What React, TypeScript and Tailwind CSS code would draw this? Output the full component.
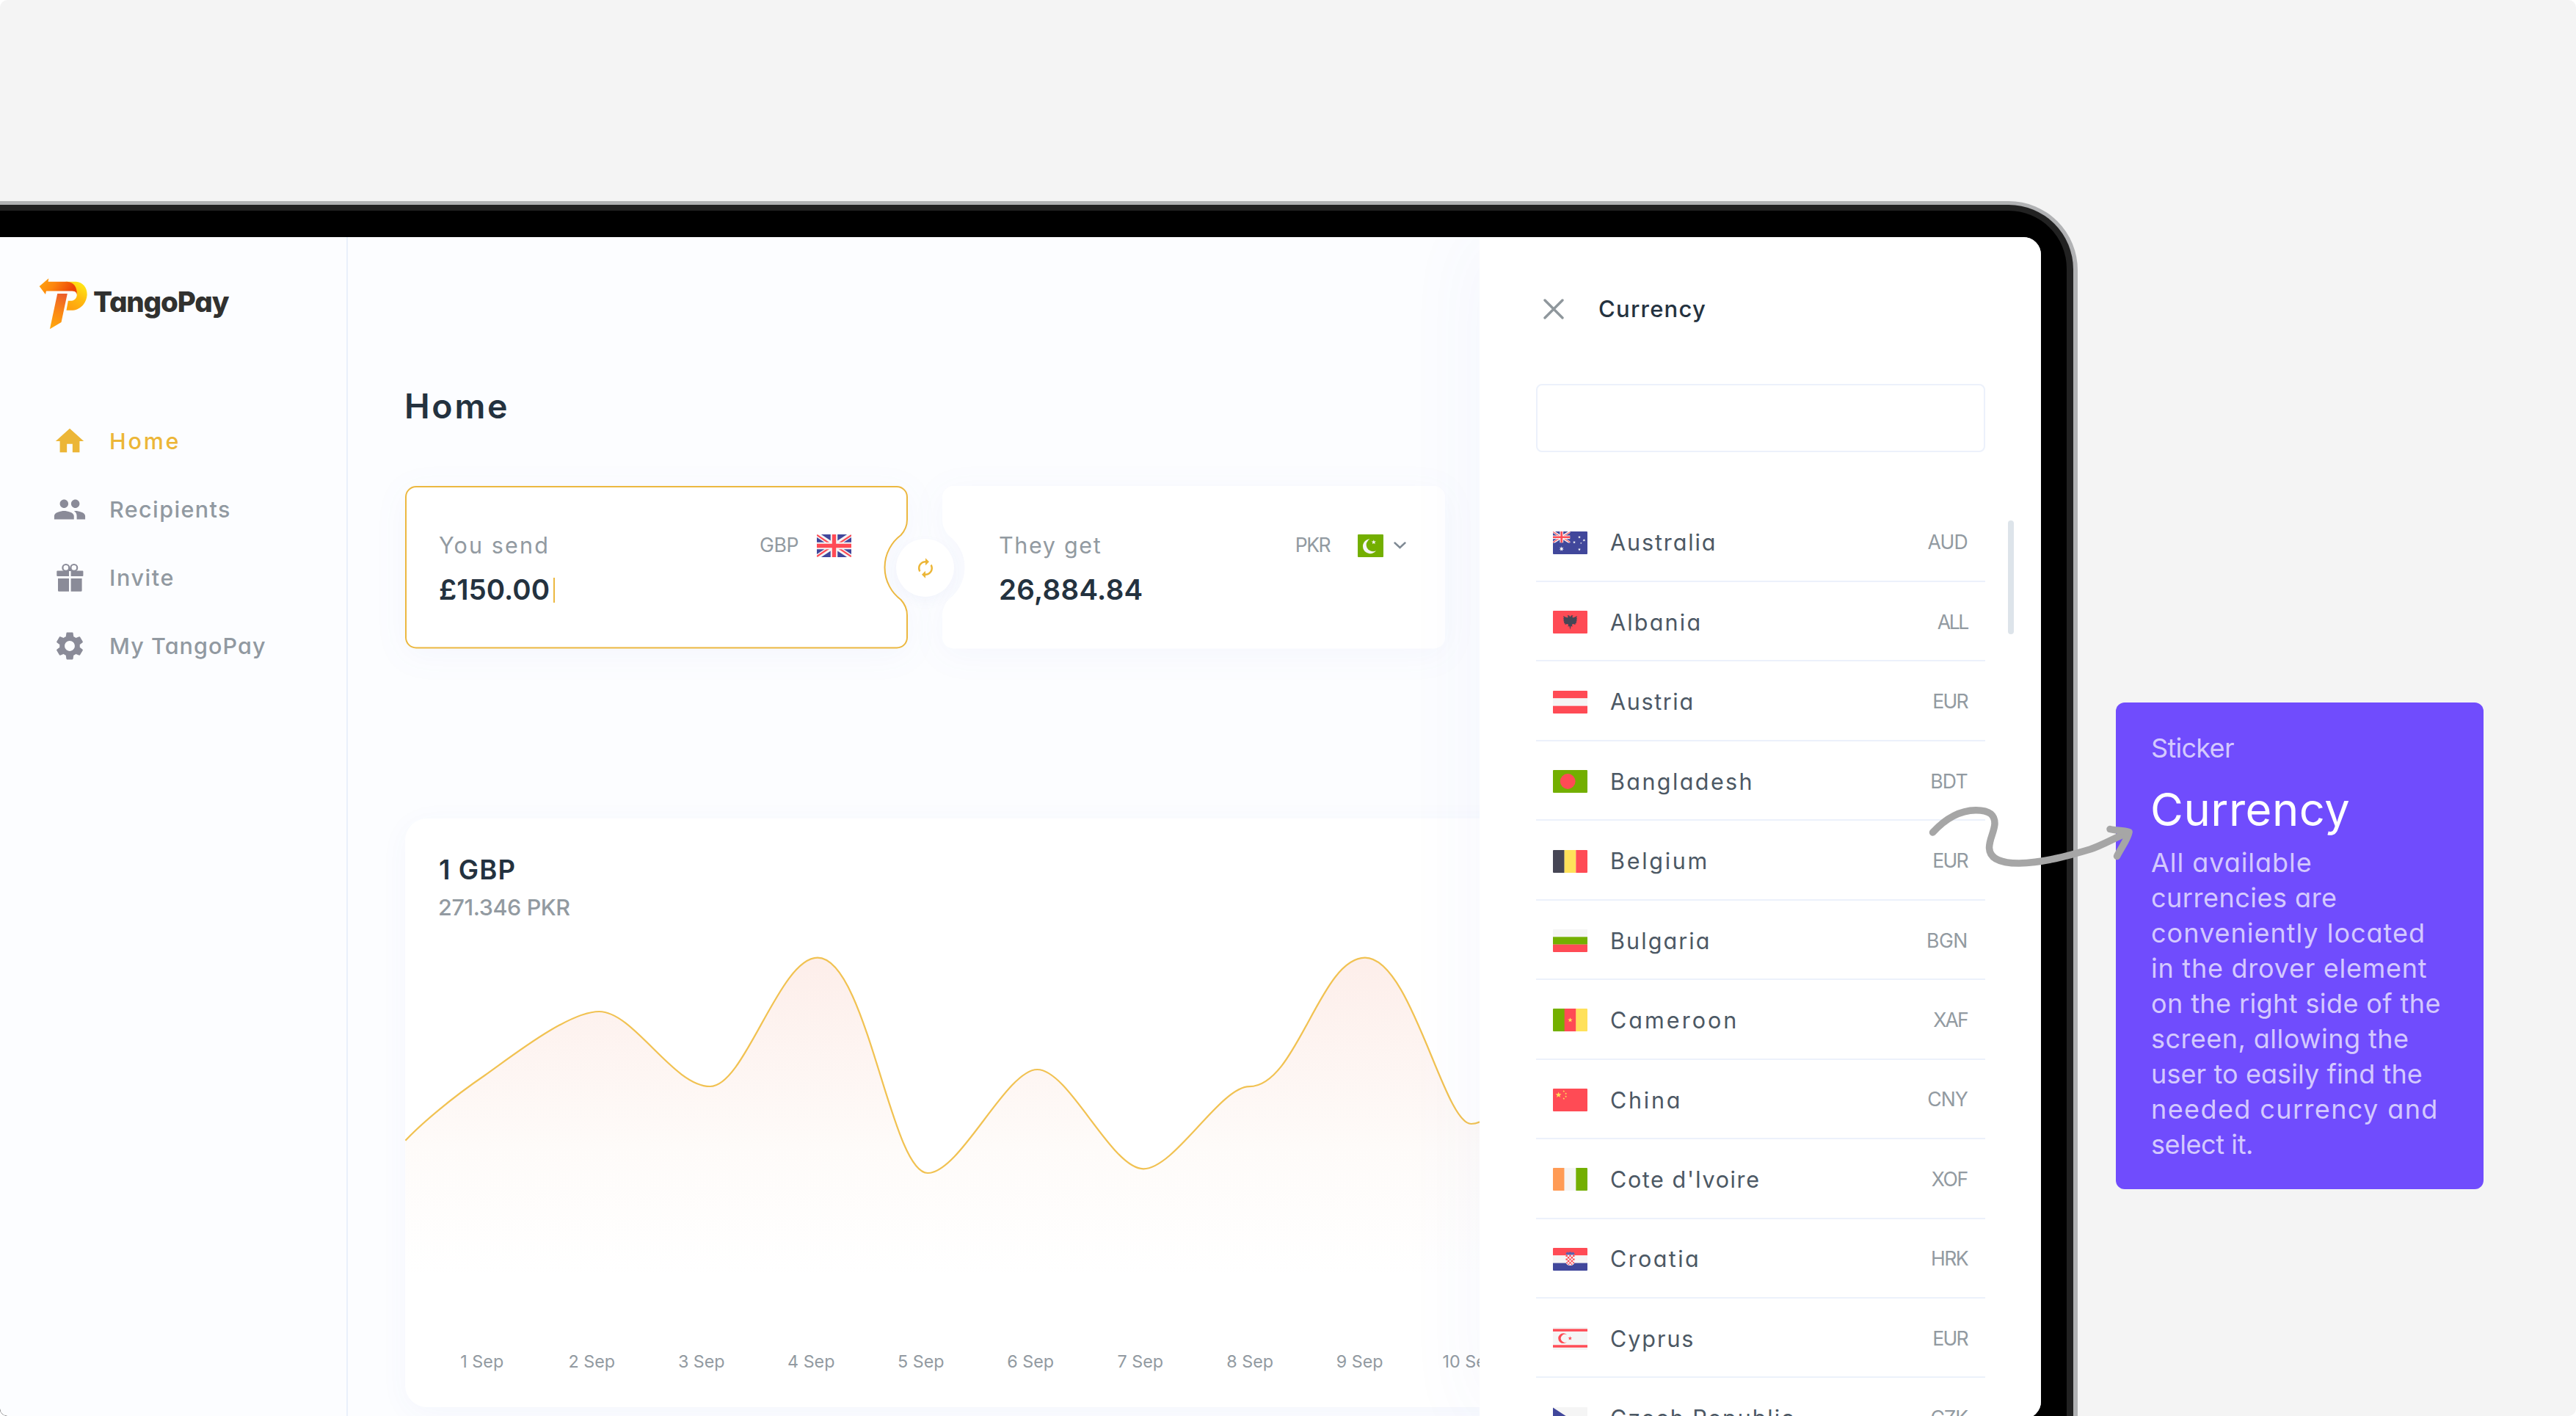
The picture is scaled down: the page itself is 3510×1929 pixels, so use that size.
import type { ReactNode } from "react";
import { MdAutorenew, MdHome, MdPeople, MdSettings } from "react-icons/md";

const RED = "#ff4b55";
const BLUE = "#41479b";
const GREEN = "#73af00";
const YELLOW = "#ffe15a";
const LIGHT = "#f5f5f5";
const DARK = "#464655";

const NAV_ITEMS = [
  { label: "Home", icon: MdHome, tracking: "tracking-[2.75px]", active: true },
  { label: "Recipients", icon: MdPeople, tracking: "tracking-[1.4px]", active: false },
  { label: "Invite", icon: GiftIcon, tracking: "tracking-[1.6px]", active: false },
  { label: "My TangoPay", icon: MdSettings, tracking: "tracking-[1.1px]", active: false },
];

const DAYS = ["1 Sep", "2 Sep", "3 Sep", "4 Sep", "5 Sep", "6 Sep", "7 Sep", "8 Sep", "9 Sep", "10 Sep"];

const CURRENCIES: { name: string; code: string; flag: ReactNode; tracking: string; codeTracking: string }[] = [
  { name: "Australia", code: "AUD", flag: <AustraliaFlag />, tracking: "tracking-[1.9px]", codeTracking: "tracking-[-0.8px]" },
  { name: "Albania", code: "ALL", flag: <AlbaniaFlag />, tracking: "tracking-[2.2px]", codeTracking: "tracking-[-2.4px]" },
  { name: "Austria", code: "EUR", flag: <HorizontalBands colors={[RED, LIGHT, RED]} />, tracking: "tracking-[1.65px]", codeTracking: "tracking-[-1.7px]" },
  { name: "Bangladesh", code: "BDT", flag: <BangladeshFlag />, tracking: "tracking-[2.4px]", codeTracking: "tracking-[-0.7px]" },
  { name: "Belgium", code: "EUR", flag: <VerticalBands colors={[DARK, YELLOW, RED]} />, tracking: "tracking-[2.7px]", codeTracking: "tracking-[-1.7px]" },
  { name: "Bulgaria", code: "BGN", flag: <HorizontalBands colors={[LIGHT, GREEN, RED]} />, tracking: "tracking-[2.1px]", codeTracking: "tracking-[-0.4px]" },
  { name: "Cameroon", code: "XAF", flag: <CameroonFlag />, tracking: "tracking-[3.05px]", codeTracking: "tracking-[-1.8px]" },
  { name: "China", code: "CNY", flag: <ChinaFlag />, tracking: "tracking-[2.75px]", codeTracking: "tracking-[-0.9px]" },
  { name: "Cote d'Ivoire", code: "XOF", flag: <VerticalBands colors={["#ff9b55", LIGHT, GREEN]} />, tracking: "tracking-[1.6px]", codeTracking: "tracking-[-1.3px]" },
  { name: "Croatia", code: "HRK", flag: <CroatiaFlag />, tracking: "tracking-[2.4px]", codeTracking: "tracking-[-1.6px]" },
  { name: "Cyprus", code: "EUR", flag: <CyprusFlag />, tracking: "tracking-[1.95px]", codeTracking: "tracking-[-1.7px]" },
  { name: "Czech Republic", code: "CZK", flag: <CzechFlag />, tracking: "tracking-[1.95px]", codeTracking: "tracking-[-1.2px]" },
];

const STICKER_LINES = [
  { text: "All available", tracking: "tracking-[0.95px]" },
  { text: "currencies are", tracking: "tracking-[0.5px]" },
  { text: "conveniently located", tracking: "tracking-[1px]" },
  { text: "in the drover element", tracking: "tracking-[0.75px]" },
  { text: "on the right side of the", tracking: "tracking-[0.4px]" },
  { text: "screen, allowing the", tracking: "tracking-[0.45px]" },
  { text: "user to easily find the", tracking: "tracking-[0.1px]" },
  { text: "needed currency and", tracking: "tracking-[1.4px]" },
  { text: "select it.", tracking: "tracking-[-0.4px]" },
];

const CURVE =
  "M552.4 1553.7C575 1530 615 1496 660.5 1465C700 1437 775 1378 816.5 1378C863.4 1378 917 1480 967.6 1480" +
  "C1015 1480 1061.6 1304.7 1114 1304.7C1181 1304.7 1214 1598 1264 1598C1308.4 1598 1371 1457 1413.4 1457" +
  "C1456.6 1457 1514.2 1592.3 1558 1592.3C1600.4 1592.3 1662.8 1480.2 1702.3 1480.2" +
  "C1767.3 1480.2 1798.4 1304.7 1860 1304.7C1923 1304.7 1967.2 1531 2004.6 1531C2020 1531 2030 1518 2042 1508";

/* ---------- Icons ---------- */

function GiftIcon({ className }: { className?: string }) {
  return (
    <svg viewBox="0 0 46 46" className={className} fill="currentColor">
      <path d="M5.3 14.4q0-1 1-1H22V21H6.3q-1 0-1-1zM24.6 13.4h15.8q1 0 1 1V20q0 1-1 1H24.6zM7 24.1h15v17.6H8.2q-1.2 0-1.2-1.2zM24.6 24.1h15v16.4q0 1.2-1.2 1.2H24.6z" />
      <circle cx="17.8" cy="9.4" r="4.4" fill="none" stroke="currentColor" strokeWidth="2.2" />
      <circle cx="28.8" cy="9.4" r="4.4" fill="none" stroke="currentColor" strokeWidth="2.2" />
      <path d="M20.5 14h5.6l-2.8-5z" />
    </svg>
  );
}

function LogoMark() {
  return (
    <svg viewBox="40 55 202 215" className="w-[67px] h-[72px] shrink-0">
      <defs>
        <linearGradient id="logo-arrow" x1="0" y1="0" x2="1" y2="0.25">
          <stop offset="0" stopColor="#ffa60c" />
          <stop offset="0.45" stopColor="#fd860c" />
          <stop offset="1" stopColor="#ec4207" />
        </linearGradient>
        <linearGradient id="logo-bowl" x1="0.85" y1="0.1" x2="0.4" y2="1">
          <stop offset="0" stopColor="#ffe716" />
          <stop offset="0.5" stopColor="#ffbc10" />
          <stop offset="1" stopColor="#ffa20f" />
        </linearGradient>
        <linearGradient id="logo-stem" x1="0.6" y1="0" x2="0.4" y2="1">
          <stop offset="0" stopColor="#ec5f2a" />
          <stop offset="0.55" stopColor="#fb8a14" />
          <stop offset="1" stopColor="#ffa70e" />
        </linearGradient>
      </defs>
      <path d="M150 71h42c28 2 46 23 46 52c-2 38-30 66-64 66h-21l7-39h14c14-2 22-13 22-25c0-10-6-15-16-15z" fill="url(#logo-bowl)" />
      <path d="M42 90L80 58l-2 13h78c26 1 42 22 40 53c-2-10-8-14-19-14H70l-3 13z" fill="url(#logo-arrow)" />
      <path d="M116 120h41l-25 118l-47 28z" fill="url(#logo-stem)" />
    </svg>
  );
}

/* ---------- Flags ---------- */

function Flag({ children }: { children: ReactNode }) {
  return (
    <svg viewBox="0 0 47 31" className="w-[47px] h-[31px] shrink-0 rounded-[1px]">
      {children}
    </svg>
  );
}

function UnionJack() {
  return (
    <>
      <rect width="47" height="31" fill={BLUE} />
      <path d="M0 0L47 31M47 0L0 31" stroke={LIGHT} strokeWidth="6.5" />
      <path d="M0 0.8L22 15.5M47 1.2L26 15M0 30L21 16M25 15.5L47 30.2" stroke={RED} strokeWidth="2.2" />
      <path d="M23.5 0V31M0 15.5H47" stroke={LIGHT} strokeWidth="9.5" />
      <path d="M23.5 0V31M0 15.5H47" stroke={RED} strokeWidth="5.4" />
    </>
  );
}

function star(cx: number, cy: number, r: number, points = 5) {
  const out: string[] = [];
  for (let i = 0; i < points * 2; i++) {
    const rad = i % 2 ? r * 0.42 : r;
    const a = (Math.PI * i) / points - Math.PI / 2;
    out.push(`${(cx + rad * Math.cos(a)).toFixed(2)},${(cy + rad * Math.sin(a)).toFixed(2)}`);
  }
  return out.join(" ");
}

function HorizontalBands({ colors }: { colors: string[] }) {
  return (
    <Flag>
      {colors.map((c, i) => (
        <rect key={i} y={i * 10.33} width="47" height="10.4" fill={c} />
      ))}
    </Flag>
  );
}

function VerticalBands({ colors }: { colors: string[] }) {
  return (
    <Flag>
      {colors.map((c, i) => (
        <rect key={i} x={i * 15.67} width="15.7" height="31" fill={c} />
      ))}
    </Flag>
  );
}

function AustraliaFlag() {
  return (
    <Flag>
      <rect width="47" height="31" fill={BLUE} />
      <svg width="23.5" height="15.5" viewBox="0 0 47 31">
        <UnionJack />
      </svg>
      <polygon points={star(11.7, 23.7, 3.4, 7)} fill={LIGHT} />
      <polygon points={star(36, 7.7, 2, 7)} fill={LIGHT} />
      <polygon points={star(42.4, 12, 2, 7)} fill={LIGHT} />
      <polygon points={star(29, 14.7, 2, 7)} fill={LIGHT} />
      <polygon points={star(38.3, 16, 1.3)} fill={LIGHT} />
      <polygon points={star(36, 24.6, 2, 7)} fill={LIGHT} />
    </Flag>
  );
}

function AlbaniaFlag() {
  return (
    <Flag>
      <rect width="47" height="31" fill={RED} />
      <path
        d="M23.5 8.5l-1.6-2.3-2.6.4 1.4 1.3-.8 1.5-3-.9-2.7-1.5.6 3-.8 1 1 1.4-.8 1.7 1.3 1-.6 1.8 1.7.4-.2 1.8 3.2-1.2 1.6 1.2-1 2.4 2.2-.6 1.1 4.8 1.1-4.8 2.2.6-1-2.4 1.6-1.2 3.2 1.2-.2-1.8 1.7-.4-.6-1.8 1.3-1-.8-1.7 1-1.4-.8-1 .6-3-2.7 1.5-3 .9-.8-1.5 1.4-1.3-2.6-.4z"
        fill={DARK}
      />
    </Flag>
  );
}

function BangladeshFlag() {
  return (
    <Flag>
      <rect width="47" height="31" fill={GREEN} />
      <circle cx="20.2" cy="15.5" r="10.4" fill={RED} />
    </Flag>
  );
}

function CameroonFlag() {
  return (
    <Flag>
      <rect width="16" height="31" fill={GREEN} />
      <rect x="15.7" width="16" height="31" fill={RED} />
      <rect x="31.3" width="15.7" height="31" fill={YELLOW} />
      <polygon points={star(23.5, 15.6, 3.4)} fill={YELLOW} />
    </Flag>
  );
}

function ChinaFlag() {
  return (
    <Flag>
      <rect width="47" height="31" fill={RED} />
      <polygon points={star(7.6, 8.6, 4.2)} fill={YELLOW} />
      <polygon points={star(14.8, 3.6, 1.5)} fill={YELLOW} />
      <polygon points={star(17.6, 6.8, 1.5)} fill={YELLOW} />
      <polygon points={star(17.6, 10.8, 1.5)} fill={YELLOW} />
      <polygon points={star(14.8, 13.6, 1.5)} fill={YELLOW} />
    </Flag>
  );
}

function CroatiaFlag() {
  return (
    <Flag>
      <rect width="47" height="10.4" fill={RED} />
      <rect y="10.3" width="47" height="10.4" fill={LIGHT} />
      <rect y="20.6" width="47" height="10.4" fill={BLUE} />
      <path d="M17.5 7.5l2-2 1.5 1 2.5-1.3 2.5 1.3 1.5-1 2 2-.8 2.5H18.3z" fill="#5a62ae" />
      <path d="M17.5 9.6h12v8.5q0 6-6 6t-6-6z" fill={LIGHT} />
      <path
        d="M17.5 9.6h2.4v2.4h-2.4zM22.3 9.6h2.4v2.4h-2.4zM27.1 9.6h2.4v2.4h-2.4zM19.9 12h2.4v2.4h-2.4zM24.7 12h2.4v2.4h-2.4zM17.5 14.4h2.4v2.4h-2.4zM22.3 14.4h2.4v2.4h-2.4zM27.1 14.4h2.4v2.4h-2.4zM19.9 16.8h2.4v2.4h-2.4zM24.7 16.8h2.4v2.4h-2.4zM17.9 19.2h2v2.4h-1zM22.3 19.2h2.4v2.4h-2.4zM27.1 19.2h2v1.4l-2 1zM20.5 21.6h1.8v2l-1.8-.8zM24.7 21.6h1.8v1.2l-1.8.8z"
        fill={RED}
      />
    </Flag>
  );
}

function CyprusFlag() {
  return (
    <Flag>
      <rect width="47" height="31" fill={LIGHT} />
      <rect y="2.4" width="47" height="3.4" fill={RED} />
      <rect y="24.3" width="47" height="3.4" fill={RED} />
      <path d="M19.2 19.9a6.9 6.9 0 1 1 0-9.4a5.5 5.5 0 1 0 0 9.4z" fill={RED} />
      <polygon points={star(23.3, 15.2, 2.9)} fill={RED} />
    </Flag>
  );
}

function CzechFlag() {
  return (
    <Flag>
      <rect width="47" height="15.5" fill={LIGHT} />
      <rect y="15.5" width="47" height="15.5" fill={RED} />
      <path d="M0 0.5L23 15.5L0 30.5z" fill={BLUE} />
    </Flag>
  );
}

/* ---------- Layout ---------- */

function Sidebar() {
  return (
    <aside className="w-[474px] shrink-0 border-r-2 border-[#e9f0fb] pt-[55px]">
      <div className="flex items-center gap-[7px] pl-[53px] h-[72px]">
        <LogoMark />
        <span className="mb-[6px] text-[38.5px] leading-none font-extrabold tracking-[-1.15px] text-[#31312f]">TangoPay</span>
      </div>
      <nav className="mt-[104px]">
        {NAV_ITEMS.map((item) => (
          <div
            key={item.label}
            className={
              item.active
                ? "flex items-center h-[93px] pl-[72px] gap-[31px] text-[#ecb637]"
                : "flex items-center h-[93px] pl-[72px] gap-[31px] text-[#8a8b98]"
            }
          >
            <item.icon className="w-[46px] h-[46px] shrink-0" />
            <span className={`text-[30.5px] font-medium ${item.tracking} ${item.active ? "text-[#ecb637]" : "text-[#9199a1]"}`}>
              {item.label}
            </span>
          </div>
        ))}
      </nav>
    </aside>
  );
}

function CardShape({ outlined, className }: { outlined?: boolean; className: string }) {
  return (
    <svg viewBox="0 0 685 222" className={className}>
      <path
        d="M15 1H670a14 14 0 0 1 14 14V46C684 55 681 61 675.5 67A55 55 0 0 0 675.5 155C681 161 684 167 684 176V206.5a14 14 0 0 1-14 14H15a14 14 0 0 1-14-14V15A14 14 0 0 1 15 1z"
        fill="#ffffff"
        stroke={outlined ? "#ecb840" : "#ffffff"}
        strokeWidth="2"
      />
    </svg>
  );
}

function Exchange() {
  return (
    <div className="relative flex gap-[47px] mt-[79px]">
      <div className="relative w-[685px] h-[222px] shrink-0">
        <CardShape outlined className="absolute inset-0 w-[685px] h-[222px] overflow-visible drop-shadow-[0_8px_22px_rgba(70,90,200,0.045)]" />
        <div className="relative pt-[61px] pl-[46px] pr-[77px]">
          <div className="flex items-center h-10 text-[#929aa1]">
            <span className="flex-1 text-[30.5px] tracking-[2.15px]">You send</span>
            <span className="mr-[25px] text-[26.6px] tracking-[-0.45px]">GBP</span>
            <Flag>
              <UnionJack />
            </Flag>
          </div>
          <div className="flex items-center h-[50px] mt-4">
            <span className="text-[38.5px] font-semibold text-[#24323f]">£150.00</span>
            <span className="w-0.5 h-[34px] ml-[5px] bg-[#ecb840]" />
          </div>
        </div>
      </div>

      <div className="relative w-[685px] h-[222px] shrink-0">
        <CardShape className="absolute inset-0 w-[685px] h-[222px] overflow-visible -scale-x-100 drop-shadow-[0_8px_22px_rgba(70,90,200,0.045)]" />
        <div className="relative pt-[61px] pl-[77px] pr-[53px]">
          <div className="flex items-center h-10 text-[#929aa1]">
            <span className="flex-1 text-[30.5px] tracking-[1.65px]">They get</span>
            <span className="mr-[38px] text-[26.6px] tracking-[-1.6px]">PKR</span>
            <svg viewBox="0 0 35 31" className="w-[35px] h-[31px]">
              <rect width="35" height="31" rx="1" fill={GREEN} />
              <path d="M25 22.2a10 10 0 1 1-8.5-16a8.2 8.2 0 1 0 8.5 16z" fill={LIGHT} />
              <polygon points={star(21.8, 10.5, 3.3)} fill={LIGHT} />
            </svg>
            <svg viewBox="0 0 17 10" className="w-[17px] h-[10px] ml-[14px]" fill="none" stroke="#7f8a94" strokeWidth="2.4" strokeLinecap="round">
              <path d="M1.5 1.5L8.5 8L15.5 1.5" />
            </svg>
          </div>
          <div className="flex items-center h-[50px] mt-4">
            <span className="text-[38.5px] font-semibold tracking-[0.3px] text-[#24323f]">26,884.84</span>
          </div>
        </div>
      </div>

      {/* swap button sits in the notch between the cards */}
      <div className="absolute left-[669px] top-[72px] w-[79px] h-[79px] rounded-full bg-white flex items-center justify-center shadow-[0_6px_16px_rgba(70,90,200,0.05)]">
        <MdAutorenew className="w-[30px] h-[30px] text-[#ecb637]" />
      </div>
    </div>
  );
}

function RateChart() {
  return (
    <section className="w-[1640px] h-[802px] mt-[231px] pt-12 rounded-[30px] bg-white shadow-[0_8px_40px_rgba(70,90,200,0.045)]">
      <h2 className="pl-[46px] text-[36.5px] leading-[44px] font-semibold tracking-[1.1px] text-[#24323f]">1 GBP</h2>
      <p className="pl-[45px] mt-[9px] text-[30.5px] leading-10 font-medium tracking-[-0.4px] text-[#929aa1]">271.346 PKR</p>
      <svg viewBox="552 1296 1488 464" className="block w-[1488px] h-[464px] mt-10">
        <defs>
          <linearGradient id="rate-fill" gradientUnits="userSpaceOnUse" x1="0" y1="1305" x2="0" y2="1735">
            <stop offset="0" stopColor="#fdeeea" />
            <stop offset="0.6" stopColor="#fefbf9" />
            <stop offset="1" stopColor="#ffffff" />
          </linearGradient>
        </defs>
        <path d={`${CURVE}V1760H552.4z`} fill="url(#rate-fill)" />
        <path d={CURVE} fill="none" stroke="#f1c252" strokeWidth="2.2" />
      </svg>
      <div className="flex mt-20 pl-[30px]">
        {DAYS.map((day) => (
          <span key={day} className="w-[149.5px] shrink-0 text-center text-[23.3px] leading-[30px] text-[#929aa1]">
            {day}
          </span>
        ))}
      </div>
    </section>
  );
}

function CurrencyDrawer() {
  return (
    <aside className="relative z-10 w-[765px] shrink-0 pl-[77px] pt-[78px] bg-white shadow-[-10px_0_100px_rgba(70,100,220,0.045)]">
      <div className="flex items-center h-10 pl-[10px]">
        <svg viewBox="0 0 28 28" className="w-7 h-7" stroke="#8f979c" strokeWidth="3.4" strokeLinecap="round">
          <path d="M2 2L26 26M26 2L2 26" />
        </svg>
        <span className="ml-[47px] text-[31px] font-medium tracking-[1.25px] text-[#24323f]">Currency</span>
      </div>
      <div className="w-[612px] h-[93px] mt-[82px] rounded-lg border-2 border-[#ecf1fb]" />
      <div className="flex items-start mt-[68.5px]">
        <ul className="w-[612px]">
          {CURRENCIES.map((c) => (
            <li key={c.name} className="flex items-center h-[108.46px] pt-[3px] pl-[23px] pr-6 border-b-2 border-[#ecf1fb]">
              {c.flag}
              <span className={`flex-1 ml-[31px] text-[30.5px] text-[#4c5864] ${c.tracking}`}>{c.name}</span>
              <span className={`text-[26.6px] text-[#929aa1] ${c.codeTracking}`}>{c.code}</span>
            </li>
          ))}
        </ul>
        <div className="w-2 h-[155px] mt-6 ml-[31px] rounded-full bg-[#dde4ea]" />
      </div>
    </aside>
  );
}

function Sticker() {
  return (
    <div className="w-[501px] h-[663px] shrink-0 mt-[683px] ml-[52px] pl-12 pt-[38px] rounded-xl bg-[#704cfd] text-[#d4c9fe]">
      <p className="text-[36px] leading-[48px] tracking-[-0.7px]">Sticker</p>
      <h1 className="mt-6 -ml-px text-[61.5px] leading-[72px] tracking-[0.5px] text-white">Currency</h1>
      <div className="mt-3 text-[36px] leading-[48px] whitespace-nowrap">
        {STICKER_LINES.map((l) => (
          <p key={l.text} className={l.tracking}>{l.text}</p>
        ))}
      </div>
    </div>
  );
}

export default function App() {
  return (
    <div className="w-[3510px] h-[1929px] bg-white">
      <div className="relative flex items-start w-full h-full pt-[274px] overflow-hidden rounded-[10px] bg-[#f4f4f4] font-[Inter,sans-serif] [font-feature-settings:'cv11']">
        {/* tablet body: metal edge, dark rim, black bezel */}
        <div className="w-[2831px] h-[1720px] shrink-0 pt-[5px] pr-[6px] rounded-tr-[94px] bg-[#b1b2b4]">
          <div className="h-full pt-2 pr-[9px] rounded-tr-[88px] bg-[#222222]">
            <div className="h-full pt-9 pr-[35px] rounded-tr-[79px] bg-black">
              <div className="flex w-[2781px] h-[1610px] overflow-hidden rounded-r-3xl bg-[#fcfdff]">
                <Sidebar />
                <main className="w-[1542px] shrink-0 overflow-hidden pl-[78px] pt-[200px]">
                  <h1 className="-ml-px text-[46.5px] leading-[60px] font-semibold tracking-[2.7px] text-[#24323f]">Home</h1>
                  <Exchange />
                  <RateChart />
                </main>
                <CurrencyDrawer />
              </div>
            </div>
          </div>
        </div>

        <Sticker />

        {/* hand-drawn arrow from the drawer to the sticker */}
        <svg
          viewBox="2620 1090 300 95"
          className="absolute left-[2620px] top-[1090px] w-[300px] h-[95px] z-20"
          fill="none"
          stroke="#a6a6a6"
          strokeWidth="9.5"
          strokeLinecap="round"
          strokeLinejoin="round"
        >
          <path d="M2633.5 1134C2650 1116 2669 1104 2692 1103.7C2712 1103.5 2718 1111 2718 1122C2717.5 1133 2710.5 1143 2710.5 1155C2711 1170 2726 1176 2751 1176C2785 1175 2818 1166 2848 1157C2866 1151 2884 1140 2900 1134" />
          <path d="M2875 1129.5C2883 1131.5 2893 1131 2901 1133.5C2899 1144 2890 1155 2884.5 1166.5" />
        </svg>
      </div>
    </div>
  );
}
